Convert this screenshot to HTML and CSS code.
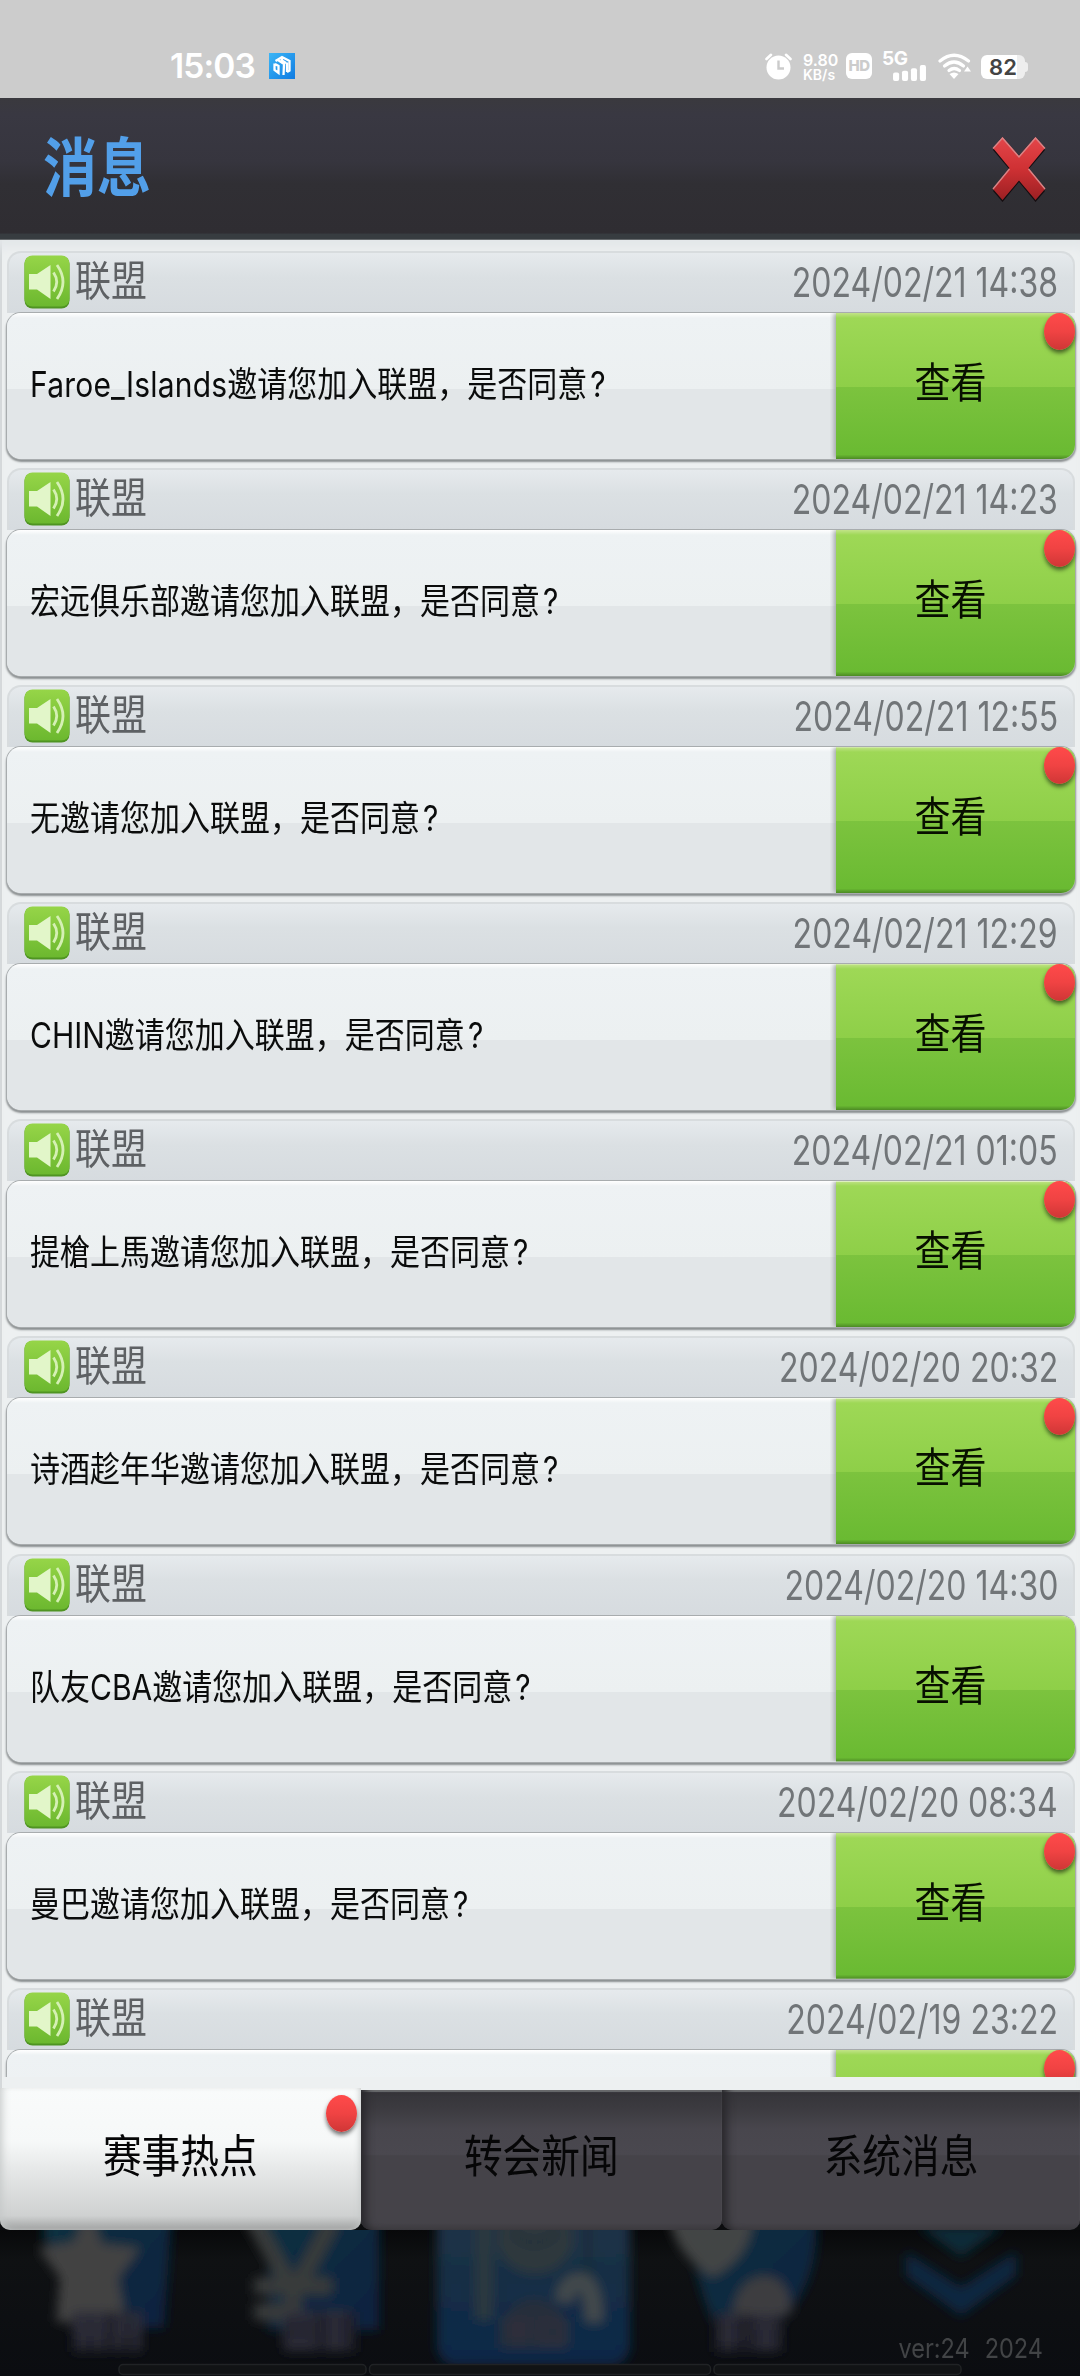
FILE: index.html
```html
<!DOCTYPE html>
<html lang="zh-CN">
<head>
<meta charset="utf-8">
<title>消息</title>
<link rel="stylesheet" href="styles.css">
</head>
<body>
<svg class="defs" width="0" height="0" aria-hidden="true">
  <defs>
    <linearGradient id="green" x1="0" y1="0" x2="0" y2="1"><stop offset="0" stop-color="#96d548"/><stop offset="1" stop-color="#6cb82f"/></linearGradient>
    <linearGradient id="red" x1="0" y1="0" x2="0" y2="1"><stop offset="0" stop-color="#e4464a"/><stop offset=".5" stop-color="#cf3134"/><stop offset="1" stop-color="#9c2023"/></linearGradient>
    <linearGradient id="sky" x1="0" y1="0" x2="1" y2="1"><stop offset="0" stop-color="#3cb6f6"/><stop offset="1" stop-color="#0f7be2"/></linearGradient>
    <symbol id="speaker" viewBox="0 0 46 54">
      <rect x=".5" y="1" width="45" height="52.5" rx="8" fill="#4f9422"/>
      <rect x=".5" y=".5" width="45" height="51" rx="8" fill="url(#green)"/>
      <path d="M5 19h8L26.500 10v34L13 34.500H5z" fill="#e2f6c9"/>
      <path d="M29.500 17.500q6.500 9.500 0 19M33 10q12 17 0 34" fill="none" stroke="#d5f0b4" stroke-width="2.800"/>
    </symbol>
  </defs>
</svg>

<header class="status">
  <div class="status-left">
    <span class="clock">15:03</span>
    <svg class="app" width="26" height="26" viewBox="0 0 26 26"><rect width="26" height="26" fill="url(#sky)"/><path d="M6.500 8L13 4l7.500 4v9.500L18 19M13 4.500v3l4 2.500M9 7l6 4-.5 11M5.500 10.500V17l4 3v-7l-3.500-2M18 9.500V19" fill="none" stroke="#fff" stroke-width="2.300"/></svg>
  </div>
  <div class="status-right">
    <svg class="alarm" width="27" height="27" viewBox="0 0 27 27"><circle cx="13.500" cy="14.500" r="12" fill="#fff"/><path d="M1.500 6L6 1.800M25.500 6L21 1.800" stroke="#fff" stroke-width="2.600" stroke-linecap="round"/><path d="M13.500 7.500v8h5.500" fill="none" stroke="#cbcbcb" stroke-width="2.400"/></svg>
    <div class="speed"><span>9.80</span><small>KB/s</small></div>
    <div class="hd">HD</div>
    <div class="signal"><span>5G</span><svg width="35" height="17" viewBox="0 0 35 17" fill="#fff"><rect y="8" width="6.500" height="9" rx="2"/><rect x="9.500" y="6" width="6.500" height="11" rx="2"/><rect x="19" y="3.500" width="6.500" height="13.500" rx="2"/><rect x="28.500" width="6.500" height="17" rx="2"/></svg></div>
    <svg class="wifi" width="33" height="26" viewBox="0 0 33 26"><g fill="none" stroke="#fff" stroke-width="3.200" stroke-linecap="round"><path d="M2 8q14-11.500 28.500 0"/><path d="M6.500 13q9.500-8 19 0"/><path d="M11 17.500q5-4 10.500 0"/></g><path d="M11.500 21q4.500-3 9 0L16 26z" fill="#fff"/><path d="M29.500 13.500l3.500 5h-7z" fill="#fff"/></svg>
    <div class="battery"><b>82</b></div>
  </div>
</header>

<div class="titlebar">
  <h1 class="tall">消息</h1>
  <svg class="close" width="58" height="70" viewBox="0 0 58 70"><path d="M12.500 4L29 22.500 45.500 4 55 15 38.500 34.500 55 56 45.500 67 29 47 12.500 67 3 56 19.500 34.500 3 15z" fill="#150d10"/><path d="M12.500 2L29 21 45.500 2 55 13 38.500 33 55 54 45.500 65 29 45.500 12.500 65 3 54 19.500 33 3 13z" fill="url(#red)"/><path d="M3 13.500L12.500 3 29 22 45.500 3 55 13.500M3 54L19.500 34M38.500 34L55 54" fill="none" stroke="#d98486" stroke-width="1.400"/></svg>
</div>

<main class="panel">
  <div class="list">
    <article class="item"><div class="meta"><svg class="ico"><use href="#speaker"/></svg><span class="kind tall">联盟</span><time class="tall">2024/02/21 14:38</time></div><div class="card"><p><span class="tall"><span class="latin">Faroe_Islands</span>邀请您加入联盟，是否同意<span class="mark">?</span></span></p><button><span class="tall">查看</span></button><i class="dot"></i></div></article>
    <article class="item"><div class="meta"><svg class="ico"><use href="#speaker"/></svg><span class="kind tall">联盟</span><time class="tall">2024/02/21 14:23</time></div><div class="card"><p><span class="tall">宏远俱乐部邀请您加入联盟，是否同意<span class="mark">?</span></span></p><button><span class="tall">查看</span></button><i class="dot"></i></div></article>
    <article class="item"><div class="meta"><svg class="ico"><use href="#speaker"/></svg><span class="kind tall">联盟</span><time class="tall">2024/02/21 12:55</time></div><div class="card"><p><span class="tall">无邀请您加入联盟，是否同意<span class="mark">?</span></span></p><button><span class="tall">查看</span></button><i class="dot"></i></div></article>
    <article class="item"><div class="meta"><svg class="ico"><use href="#speaker"/></svg><span class="kind tall">联盟</span><time class="tall">2024/02/21 12:29</time></div><div class="card"><p><span class="tall">CHIN邀请您加入联盟，是否同意<span class="mark">?</span></span></p><button><span class="tall">查看</span></button><i class="dot"></i></div></article>
    <article class="item"><div class="meta"><svg class="ico"><use href="#speaker"/></svg><span class="kind tall">联盟</span><time class="tall">2024/02/21 01:05</time></div><div class="card"><p><span class="tall">提槍上馬邀请您加入联盟，是否同意<span class="mark">?</span></span></p><button><span class="tall">查看</span></button><i class="dot"></i></div></article>
    <article class="item"><div class="meta"><svg class="ico"><use href="#speaker"/></svg><span class="kind tall">联盟</span><time class="tall">2024/02/20 20:32</time></div><div class="card"><p><span class="tall">诗酒趁年华邀请您加入联盟，是否同意<span class="mark">?</span></span></p><button><span class="tall">查看</span></button><i class="dot"></i></div></article>
    <article class="item"><div class="meta"><svg class="ico"><use href="#speaker"/></svg><span class="kind tall">联盟</span><time class="tall">2024/02/20 14:30</time></div><div class="card"><p><span class="tall">队友CBA邀请您加入联盟，是否同意<span class="mark">?</span></span></p><button><span class="tall">查看</span></button></div></article>
    <article class="item"><div class="meta"><svg class="ico"><use href="#speaker"/></svg><span class="kind tall">联盟</span><time class="tall">2024/02/20 08:34</time></div><div class="card"><p><span class="tall">曼巴邀请您加入联盟，是否同意<span class="mark">?</span></span></p><button><span class="tall">查看</span></button><i class="dot"></i></div></article>
    <article class="item"><div class="meta"><svg class="ico"><use href="#speaker"/></svg><span class="kind tall">联盟</span><time class="tall">2024/02/19 23:22</time></div><div class="card"><p></p><button></button><i class="dot"></i></div></article>
  </div>
</main>

<nav class="tabs">
  <div class="tab active"><span class="tall">赛事热点</span><i class="dot"></i></div>
  <div class="tab"><span class="tall">转会新闻</span></div>
  <div class="tab"><span class="tall">系统消息</span></div>
</nav>

<footer class="dock">
  <svg class="dock-art" width="1080" height="146" viewBox="0 0 1080 146">
    <defs>
      <filter id="soft" x="-10%" y="-10%" width="120%" height="120%"><feGaussianBlur stdDeviation="5.500"/></filter>
      <linearGradient id="tile" x1="0" y1="0" x2="0" y2="1"><stop offset="0" stop-color="#2b3949"/><stop offset=".5" stop-color="#172f45"/><stop offset="1" stop-color="#0a2747"/></linearGradient>
      <linearGradient id="deep" x1="0" y1="0" x2="1" y2="1"><stop offset="0" stop-color="#0b3240"/><stop offset="1" stop-color="#0b2140"/></linearGradient>
    </defs>
    <g filter="url(#soft)">
      <path d="M44-20H172L164 98H95L70 40 44 10z" fill="url(#deep)"/>
      <path d="M88-24L102 14 140 18 118 48 126 92H56L60 48 38 18 74 12z" fill="#424343"/>
      <path d="M255-20H379V100H268V20z" fill="url(#deep)"/>
      <path d="M252-12L294 62 332-8M254 56H332M254 82H300M293 56V92" fill="none" stroke="#373a3b" stroke-width="17"/>
      <rect x="437" y="-60" width="193" height="196" rx="20" fill="url(#tile)"/>
      <path d="M484-10V90" stroke="#2c383f" stroke-width="18"/>
      <ellipse cx="535" cy="8" rx="38" ry="36" fill="#2d383e"/><path d="M512 2q22 22 46 0M588-8V48" fill="none" stroke="#1f2c36" stroke-width="5"/>
      <path d="M564 72Q566 52 580 52T594 92" fill="none" stroke="#43494b" stroke-width="18"/>
      <path d="M500 92q34-46 68 0v26h-68z" fill="#252f3b"/>
      <path d="M690-20H816Q822 60 772 98H716Q690 45 690-20z" fill="url(#deep)"/>
      <path d="M668-20H752Q756 24 713 47 672 24 668-20z" fill="#434445"/>
      <path d="M732 84q6-38 34-38 23 0 26 38" fill="#3d3e41"/>
      <path d="M906 22l55 35 55-35v24l-55 40-55-40z" fill="#0a2641"/><path d="M918-4L961 27 1004-4z" fill="#0b2c37"/>
      <g fill="#1d1f28"><rect x="72" y="82" width="70" height="40"/><rect x="284" y="82" width="72" height="40"/><rect x="714" y="84" width="68" height="38"/></g>
      <g stroke="#30323c" stroke-width="5" fill="none"><path d="M72 84H107M70 94H108M74 104H106M82 80V120M98 80V120M118 84V118M118 88H141M118 100H139M138 82V120"/><path d="M286 84H312V115H286zM299 84V118M320 84H350M322 98H350M324 112H350M335 82V120"/><path d="M504 92H532M506 104H532M518 88V116M542 92H563V112H542z"/><path d="M718 90H742M718 105H742M728 84V121M750 86H782M750 99H782M754 113H780M766 82V120"/></g>
    </g>
    <g fill="#111315" stroke="#202325" stroke-width="1.500"><rect x="119" y="134.500" width="247" height="10" rx="4"/><rect x="369.500" y="134.500" width="341" height="10" rx="4"/><rect x="714" y="134.500" width="247" height="10" rx="4"/></g>
  </svg>
  <div class="version"><span class="tall">ver:24</span><span class="tall">2024</span></div>
</footer>
</body>
</html>
```
FILE: styles.css
```css
* { box-sizing: border-box; }
body {
  margin: 0;
  width: 1080px;
  height: 2376px;
  overflow: hidden;
  display: flex;
  flex-direction: column;
  background: #0d0f11;
  font-family: Inter, "Noto Sans CJK SC", sans-serif;
}
.defs { position: absolute; }
.tall { display: inline-block; transform: scaleY(1.17); white-space: nowrap; }

/* system status bar */
.status {
  flex: none;
  height: 98px;
  padding: 51px 52px 0 170px;
  display: flex;
  justify-content: space-between;
  align-items: flex-start;
  background: #ccc;
  color: #fff;
}
.status-left, .status-right { display: flex; align-items: flex-start; }
.clock { font-size: 33.500px; line-height: 30px; font-weight: 600; width: 99px; letter-spacing: -.9px; }
.app { margin-top: 2px; }
.alarm { margin: 2px 10px 0 0; }
.speed { width: 44px; padding-left: 1px; display: flex; flex-direction: column; font-weight: 600; font-size: 16px; line-height: 16px; padding-top: 1px; }
.speed small { font-size: 14px; line-height: 14px; }
.hd { width: 26px; height: 26px; margin: 2px 10px 0 0; border-radius: 6px; background: #fff; color: #ccc; font-size: 15px; line-height: 26px; font-weight: 800; text-align: center; letter-spacing: -.5px; }
.signal { width: 56px; height: 30px; display: flex; flex-direction: column; }
.signal span { font-size: 19px; line-height: 15px; height: 14px; font-weight: 700; letter-spacing: -.5px; }
.signal svg { margin-left: 10px; }
.wifi { margin: 2px 10px 0 0; }
.battery { position: relative; width: 44px; height: 24px; margin: 4px 3px 0 0; border-radius: 6px; background: linear-gradient(90deg, #fff 82%, #eee 82%); color: #444; text-align: center; }
.battery b { display: block; font-size: 22px; line-height: 25px; font-weight: 600; }
.battery::after { content: ""; position: absolute; left: 44px; top: 7px; width: 3px; height: 10px; border-radius: 0 3px 3px 0; background: #eee; }

/* title */
.titlebar {
  flex: none;
  height: 142px;
  padding: 0 32px 0 43px;
  display: flex;
  align-items: center;
  justify-content: space-between;
  background: linear-gradient(#3a393e 0, #393842 12%, #36353e 45%, #302f34 60%, #2f2d32 95%, #373c40 96%, #373c40 99%, #7c8082 100%);
}
.titlebar h1 { margin: 0; font-size: 54px; line-height: 64px; font-weight: 700; color: #529fe9; }
.close { margin-top: 1px; }

/* message list */
.panel { flex: none; height: 1851px; padding: 8px 0 14px; background: #edf0f1; box-shadow: inset 0 14px 12px -6px #e3e7e9, inset 2px 0 #d3d7d9; }
.list { height: 1829px; overflow: hidden; }
.item { height: 217.1px; padding: 3px 5px 0 7px; }
.meta {
  height: 62px;
  padding: 4px 15px 0 17px;
  display: flex;
  align-items: flex-start;
  border: 2px solid #d8dcde;
  border-bottom: 0;
  border-radius: 14px 14px 0 0;
  background: linear-gradient(#e6eaed, #dbe0e3 40%, #d6dbdf);
}
.ico { width: 46px; height: 54px; margin-top: -2px; margin-left: -2px; }
.kind { margin-left: 5px; font-size: 36px; line-height: 49px; color: #5e6164; }
.meta time { margin-left: auto; font-size: 35px; line-height: 50px; color: #717578; transform: scale(.915, 1.17); transform-origin: right center; }
.card {
  position: relative;
  height: 146px;
  display: flex;
  border-radius: 14px;
  background: linear-gradient(#fff 0, #eef2f4 5px, #ecf0f1 52%, #e2e6e8 52%, #e2e6e8 100%);
  box-shadow: 0 0 0 1px #a8acae, 0 2px 2px 1px #8b8f90;
}
.card p { flex: 1; margin: 0; padding: 0 0 8px 23px; display: flex; align-items: center; font-size: 30px; color: #0b0c0c; }
.latin { letter-spacing: .2px; }
.mark { margin-left: 3px; }
.card button {
  width: 239px;
  margin: 0;
  padding: 0 10px 14px 0;
  border: 0;
  border-radius: 0 13px 14px 0;
  background: linear-gradient(#c2e388 0, #9ed856 5px, #8ecf48 51%, #7cc33e 51%, #6aba32 97%, #4c8a24 100%);
  box-shadow: -2px 0 5px #9fa4a5;
  clip-path: inset(0 0 0 -6px);
  font: 400 36px Inter, "Noto Sans CJK SC", sans-serif;
  color: #081000;
}
.dot {
  position: absolute;
  right: 0;
  top: 0;
  width: 31px;
  height: 37px;
  border-radius: 50%;
  background: linear-gradient(#ff4a4a, #f04343 50%, #cf3636);
  box-shadow: 0 3px 4px rgba(0, 0, 0, .55);
}

/* bottom tabs */
.tabs { flex: none; height: 142px; margin-top: -3px; display: grid; grid-template-columns: 360.500px 361.500px 358px; background: linear-gradient(#edf0f1 2px, #0b0c0e 2px); position: relative; }
.tab {
  position: relative;
  margin-top: 2px;
  display: flex;
  align-items: center;
  justify-content: center;
  border-radius: 0 0 10px 10px;
  background: linear-gradient(#353439 0, #3b3a3f 12%, #48464d 28%, #4a484f 46%, #454349 47%, #454349 95%, #3f3d42);
  box-shadow: inset 9px 0 8px -4px #29282c, inset 0 2px 1px #737577;
  font-size: 38.700px;
  color: #060607;
  padding-bottom: 14px;
}
.tab.active { margin-top: 0; padding-bottom: 12px; background: linear-gradient(#f9fbfb 0, #f6f8f8 38%, #e8eaea 55%, #cfd1d1 90%, #a9abab 98%); box-shadow: inset 7px 0 8px -5px #c5c8c8, inset -5px 0 6px -4px #c5c8c8; }
.tab .dot { right: 4px; top: 7px; }

/* dimmed dock behind the panel */
.dock { flex: 1; position: relative; padding: 104px 37px 0; background: linear-gradient(#08090a, #0f1113 20%, #0b0d11); }
.dock-art { position: absolute; left: 0; top: 0; }
.version { position: relative; display: flex; justify-content: flex-end; gap: 15px; font-size: 23.500px; line-height: 30px; color: #424446; }
```
